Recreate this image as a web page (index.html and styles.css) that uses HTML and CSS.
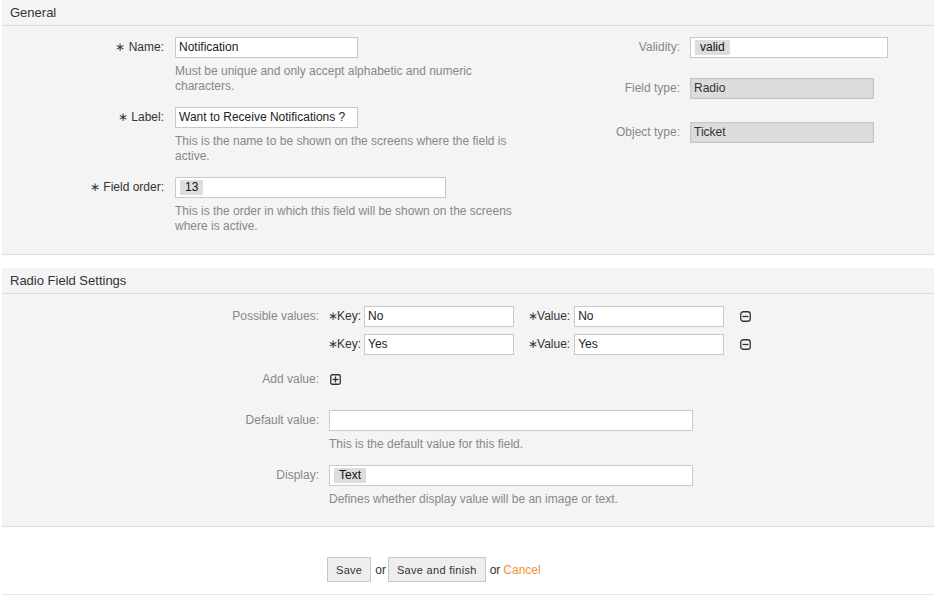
FILE: index.html
```html
<!DOCTYPE html>
<html>
<head>
<meta charset="utf-8">
<link rel="stylesheet" href="styles.css">
</head>
<body>
<div class="page">
  <section class="panel">
    <div class="panel-head">General</div>
    <div class="panel-body general">
      <div class="col-left">
        <div class="row">
          <label class="lbl req"><span class="star">∗</span> Name:</label>
          <div class="field">
            <div class="input w183">Notification</div>
            <p class="desc">Must be unique and only accept alphabetic and numeric characters.</p>
          </div>
        </div>
        <div class="row">
          <label class="lbl req"><span class="star">∗</span> Label:</label>
          <div class="field">
            <div class="input w183">Want to Receive Notifications ?</div>
            <p class="desc">This is the name to be shown on the screens where the field is active.</p>
          </div>
        </div>
        <div class="row last">
          <label class="lbl req"><span class="star">∗</span> Field order:</label>
          <div class="field">
            <div class="input w271"><span class="tag">13</span></div>
            <p class="desc">This is the order in which this field will be shown on the screens where is active.</p>
          </div>
        </div>
      </div>
      <div class="col-right">
        <div class="rrow r1">
          <label class="lbl">Validity:</label>
          <div class="input w198"><span class="tag">valid</span></div>
        </div>
        <div class="rrow r2">
          <label class="lbl">Field type:</label>
          <div class="ro">Radio</div>
        </div>
        <div class="rrow">
          <label class="lbl">Object type:</label>
          <div class="ro">Ticket</div>
        </div>
      </div>
    </div>
  </section>

  <section class="panel second">
    <div class="panel-head">Radio Field Settings</div>
    <div class="panel-body radio">
      <div class="frow pv">
        <label class="lbl">Possible values:</label>
        <div class="pairs">
          <div class="pair">
            <span class="sub req"><span class="star">∗</span>Key:</span>
            <div class="input w150">No</div>
            <span class="sub req val"><span class="star">∗</span>Value:</span>
            <div class="input w150">No</div>
            <svg class="icon minus" width="11" height="11" viewBox="0 0 11 11"><rect x="0.75" y="0.75" width="9.5" height="9.5" rx="2.5" fill="none" stroke="#333" stroke-width="1.3"/><line x1="2.5" y1="5.5" x2="8.5" y2="5.5" stroke="#333" stroke-width="1.3"/></svg>
          </div>
          <div class="pair">
            <span class="sub req"><span class="star">∗</span>Key:</span>
            <div class="input w150">Yes</div>
            <span class="sub req val"><span class="star">∗</span>Value:</span>
            <div class="input w150">Yes</div>
            <svg class="icon minus" width="11" height="11" viewBox="0 0 11 11"><rect x="0.75" y="0.75" width="9.5" height="9.5" rx="2.5" fill="none" stroke="#333" stroke-width="1.3"/><line x1="2.5" y1="5.5" x2="8.5" y2="5.5" stroke="#333" stroke-width="1.3"/></svg>
          </div>
        </div>
      </div>
      <div class="frow add">
        <label class="lbl">Add value:</label>
        <div class="addbox">
          <svg class="icon" width="11" height="11" viewBox="0 0 11 11"><rect x="0.75" y="0.75" width="9.5" height="9.5" rx="1.5" fill="none" stroke="#333" stroke-width="1.3"/><line x1="2.5" y1="5.5" x2="8.5" y2="5.5" stroke="#333" stroke-width="1.3"/><line x1="5.5" y1="2.5" x2="5.5" y2="8.5" stroke="#333" stroke-width="1.3"/></svg>
        </div>
      </div>
      <div class="frow dv">
        <label class="lbl">Default value:</label>
        <div class="field">
          <div class="input w364"></div>
          <p class="desc">This is the default value for this field.</p>
        </div>
      </div>
      <div class="frow">
        <label class="lbl">Display:</label>
        <div class="field">
          <div class="input w364"><span class="tag">Text</span></div>
          <p class="desc">Defines whether display value will be an image or text.</p>
        </div>
      </div>
    </div>
  </section>

  <div class="actions">
    <button class="btn">Save</button>
    <span class="or">or</span>
    <button class="btn">Save and finish</button>
    <span class="or or2">or</span>
    <a class="cancel" href="#">Cancel</a>
  </div>
  <div class="footer-line"></div>
</div>
</body>
</html>
```

FILE: styles.css
```css
* { box-sizing: border-box; }
html, body { margin: 0; padding: 0; background: #fff; }
body {
  font-family: "Liberation Sans", Arial, sans-serif;
  font-size: 12px;
  color: #333;
}
.page { padding-left: 2px; }

.panel {
  background: #f4f4f4;
  border-bottom: 1px solid #dedede;
}
.panel.second { margin-top: 13px; }

.panel-head {
  height: 26px;
  line-height: 25px;
  padding-left: 8px;
  font-size: 13px;
  color: #333;
  border-bottom: 1px solid #dcdcdc;
}

.panel-body.general {
  display: flex;
  padding: 11px 0 20px;
}
.col-left { width: 518px; }
.row {
  display: grid;
  grid-template-columns: 162px 1fr;
  column-gap: 11px;
  margin-bottom: 13px;
}
.row.last { margin-bottom: 0; }

.lbl {
  text-align: right;
  color: #888;
  line-height: 21px;
  white-space: nowrap;
}
.lbl.req, .sub.req { color: #333; }
.star { font-size: 12px; }
.sub .star { margin-right: -1px; }

.input {
  height: 21px;
  background: #fff;
  border: 1px solid #c9c9c9;
  padding: 0 3px;
  line-height: 19px;
  color: #222;
  font-size: 12px;
  white-space: nowrap;
  overflow: hidden;
}
.w150 { width: 150px; }
.w183 { width: 183px; }
.w198 { width: 198px; }
.w271 { width: 271px; }
.w364 { width: 364px; }

.tag {
  display: inline-block;
  background: #ddd;
  color: #111;
  padding: 0 5px;
  line-height: 15px;
  margin-left: 1px;
  vertical-align: top;
  margin-top: 2px;
}

.desc {
  margin: 6px 0 0;
  max-width: 342px;
  line-height: 15px;
  color: #888;
}

.col-right {
  display: flex;
  flex-direction: column;
}
.rrow {
  display: grid;
  grid-template-columns: 160px auto;
  column-gap: 10px;
  align-items: center;
}
.rrow.r1 { margin-bottom: 20px; }
.rrow.r2 { margin-bottom: 23px; }
.ro {
  width: 184px;
  height: 21px;
  background: #dcdcdc;
  border: 1px solid #c6c6c6;
  box-shadow: inset 0 0 2px rgba(0,0,0,0.08);
  padding: 0 3px;
  line-height: 19px;
  color: #333;
}

.panel-body.radio {
  padding: 12px 0 19px;
}
.frow {
  display: grid;
  grid-template-columns: 317px 1fr;
  column-gap: 10px;
}
.frow.pv { column-gap: 9px; }
.pairs {
  display: flex;
  flex-direction: column;
  gap: 7px;
}
.pair {
  display: flex;
  align-items: center;
}
.sub {
  line-height: 21px;
  margin-right: 3px;
  white-space: nowrap;
}
.sub.val { margin-left: 14px; margin-right: 4px; }
.icon { display: block; }
.icon.minus { margin-left: 16px; }
.frow.add { margin-top: 14px; }
.addbox {
  height: 21px;
  display: flex;
  align-items: center;
  padding-left: 1px;
}
.frow.dv { margin-top: 20px; margin-bottom: 13px; }

.actions {
  margin-top: 30px;
  padding-left: 325px;
  display: flex;
  align-items: center;
  height: 25px;
}
.btn {
  height: 25px;
  padding: 0 8px;
  background: #eee;
  border: 1px solid #c8c8c8;
  border-radius: 0;
  font-family: "Liberation Sans", Arial, sans-serif;
  font-size: 11px;
  letter-spacing: 0.3px;
  color: #333;
  cursor: pointer;
}
.or {
  margin: 0 2px 0 4px;
  color: #333;
  font-size: 12px;
}
.or.or2 { margin: 0 3px 0 4px; }
.cancel {
  color: #f3913b;
  text-decoration: none;
  font-size: 12px;
}
.footer-line {
  margin-top: 12px;
  border-top: 1px solid #e6e6e6;
}
```
